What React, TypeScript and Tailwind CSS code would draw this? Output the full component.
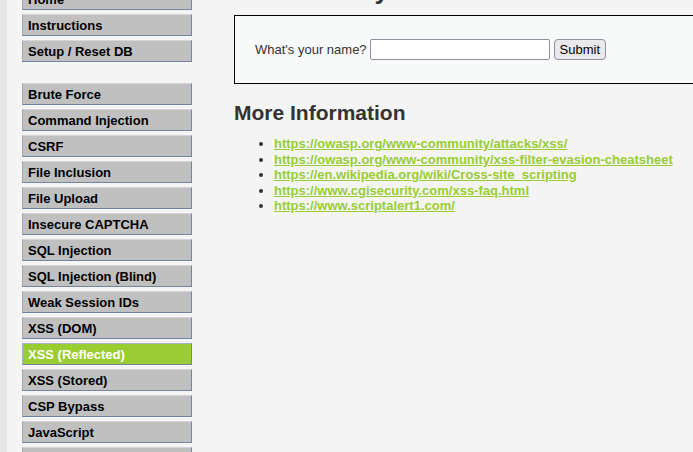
import React from "react";

const group1 = ["Home", "Instructions", "Setup / Reset DB"];
const group2 = [
  "Brute Force",
  "Command Injection",
  "CSRF",
  "File Inclusion",
  "File Upload",
  "Insecure CAPTCHA",
  "SQL Injection",
  "SQL Injection (Blind)",
  "Weak Session IDs",
  "XSS (DOM)",
  "XSS (Reflected)",
  "XSS (Stored)",
  "CSP Bypass",
  "JavaScript",
  "Authorisation Bypass",
  "Open HTTP Redirect",
];

const links = [
  "https://owasp.org/www-community/attacks/xss/",
  "https://owasp.org/www-community/xss-filter-evasion-cheatsheet",
  "https://en.wikipedia.org/wiki/Cross-site_scripting",
  "https://www.cgisecurity.com/xss-faq.html",
  "https://www.scriptalert1.com/",
];

function MenuItem({ label }: { label: string }) {
  const selected = label === "XSS (Reflected)";
  return (
    <li className="mb-[4px]">
      <a
        className={
          selected
            ? "block h-[22px] overflow-hidden pl-[5px] leading-[22px] text-[13px] font-bold text-white bg-[#9acd32] border border-t-[#a3b0cc] border-l-[#a3b0cc] border-r-[#7583a5] border-b-[#7583a5]"
            : "block h-[22px] overflow-hidden pl-[5px] leading-[22px] text-[13px] font-bold text-black bg-[#c0c0c0] border border-t-[#d6d6d6] border-l-[#a8a8a8] border-r-[#7583a5] border-b-[#7583a5]"
        }
      >
        {label}
      </a>
    </li>
  );
}

export default function App() {
  return (
    <div
      className="w-[693px] h-[452px] overflow-hidden bg-[#f4f4f4] flex"
      style={{ fontFamily: '"Liberation Sans", Arial, sans-serif' }}
    >
      <div className="w-[7px] shrink-0 bg-[#e6e6e6]" />
      <div className="w-[170px] shrink-0 ml-[15px] mt-[-12px]">
        <ul className="mb-[21px]">
          {group1.map((l) => (
            <MenuItem key={l} label={l} />
          ))}
        </ul>
        <ul>
          {group2.map((l) => (
            <MenuItem key={l} label={l} />
          ))}
        </ul>
      </div>
      <div className="ml-[42px] w-[500px] shrink-0">
        <h1 className="mt-[-25px] h-[30px] leading-[30px] text-[26px] font-bold text-[#333] whitespace-nowrap">
          Vulnerability: Reflected Cross Site Scripting (XSS)
        </h1>
        <div className="mt-[10px] h-[69px] border border-black bg-[#f8f9f9] flex items-center pl-[20px] text-[13px] text-[#333]">
          <span>What's your name?</span>
          <input
            type="text"
            className="ml-[3px] w-[180px] h-[21px] border border-[#8f8f9d] rounded-[2px] bg-white"
          />
          <button className="ml-[4px] h-[21px] px-[5px] text-[13px] text-black bg-[#e9e9ed] border border-[#8f8f9d] rounded-[4px]">
            Submit
          </button>
        </div>
        <h2 className="mt-[16px] text-[21px] leading-[26px] font-bold text-[#333]">
          More Information
        </h2>
        <ul className="mt-[10px] pl-[40px] list-disc text-[13px] leading-[15.6px] font-bold marker:text-[#333]">
          {links.map((l) => (
            <li key={l} className="h-[15.6px]">
              <a className="text-[#9acd32] underline">{l}</a>
            </li>
          ))}
        </ul>
      </div>
    </div>
  );
}
